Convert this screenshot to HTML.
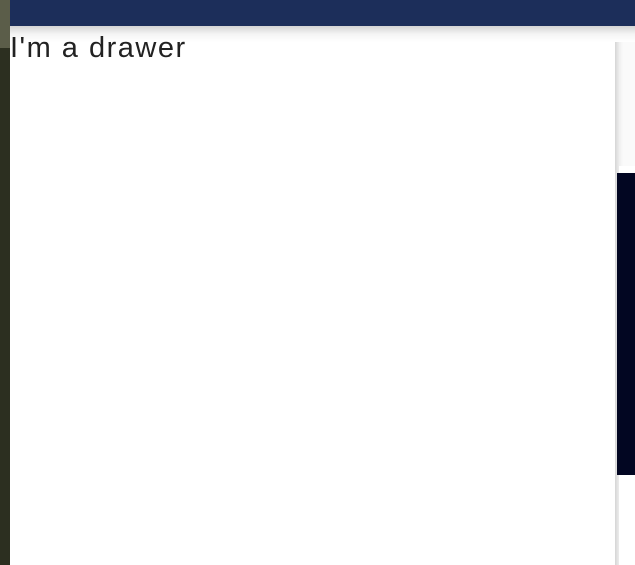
<!DOCTYPE html>
<html><head><meta charset="utf-8"><style>
html,body{margin:0;padding:0;width:635px;height:565px;overflow:hidden;background:#fff;position:relative;font-family:"Liberation Sans",sans-serif}
.l1{position:absolute;left:0;top:0;width:10px;height:48px;background:#5b5d49}
.l2{position:absolute;left:0;top:48px;width:10px;height:517px;background:#2c2f20}
.hdr{position:absolute;left:10px;top:0;width:625px;height:26px;background:#1c2e5a}
.hs{position:absolute;left:10px;top:26px;width:625px;height:16px;background:linear-gradient(#d4d4d4,#f4f4f4 8px,#fff)}
.right{position:absolute;left:615px;top:26px;width:20px;height:539px;background:#fff}
.rs{position:absolute;left:615px;top:26px;width:20px;height:140px;background:linear-gradient(90deg,#d8d8d8,#eee 4px,#fafafa 8px)}
.rs2{position:absolute;left:615px;top:26px;width:4px;height:539px;background:linear-gradient(90deg,#d5d5d5,#ececec)}
.dark{position:absolute;left:617px;top:173px;width:18px;height:302px;background:#020622}
.txt{position:absolute;left:10px;top:30px;font-size:29px;color:#222;line-height:36px;letter-spacing:1.5px}
</style></head><body>
<div class="l1"></div><div class="l2"></div>
<div class="right"></div><div class="rs"></div><div class="rs2"></div>
<div class="dark"></div>
<div class="hs"></div>
<div class="hdr"></div>
<div class="txt">I'm a drawer</div>
</body></html>
